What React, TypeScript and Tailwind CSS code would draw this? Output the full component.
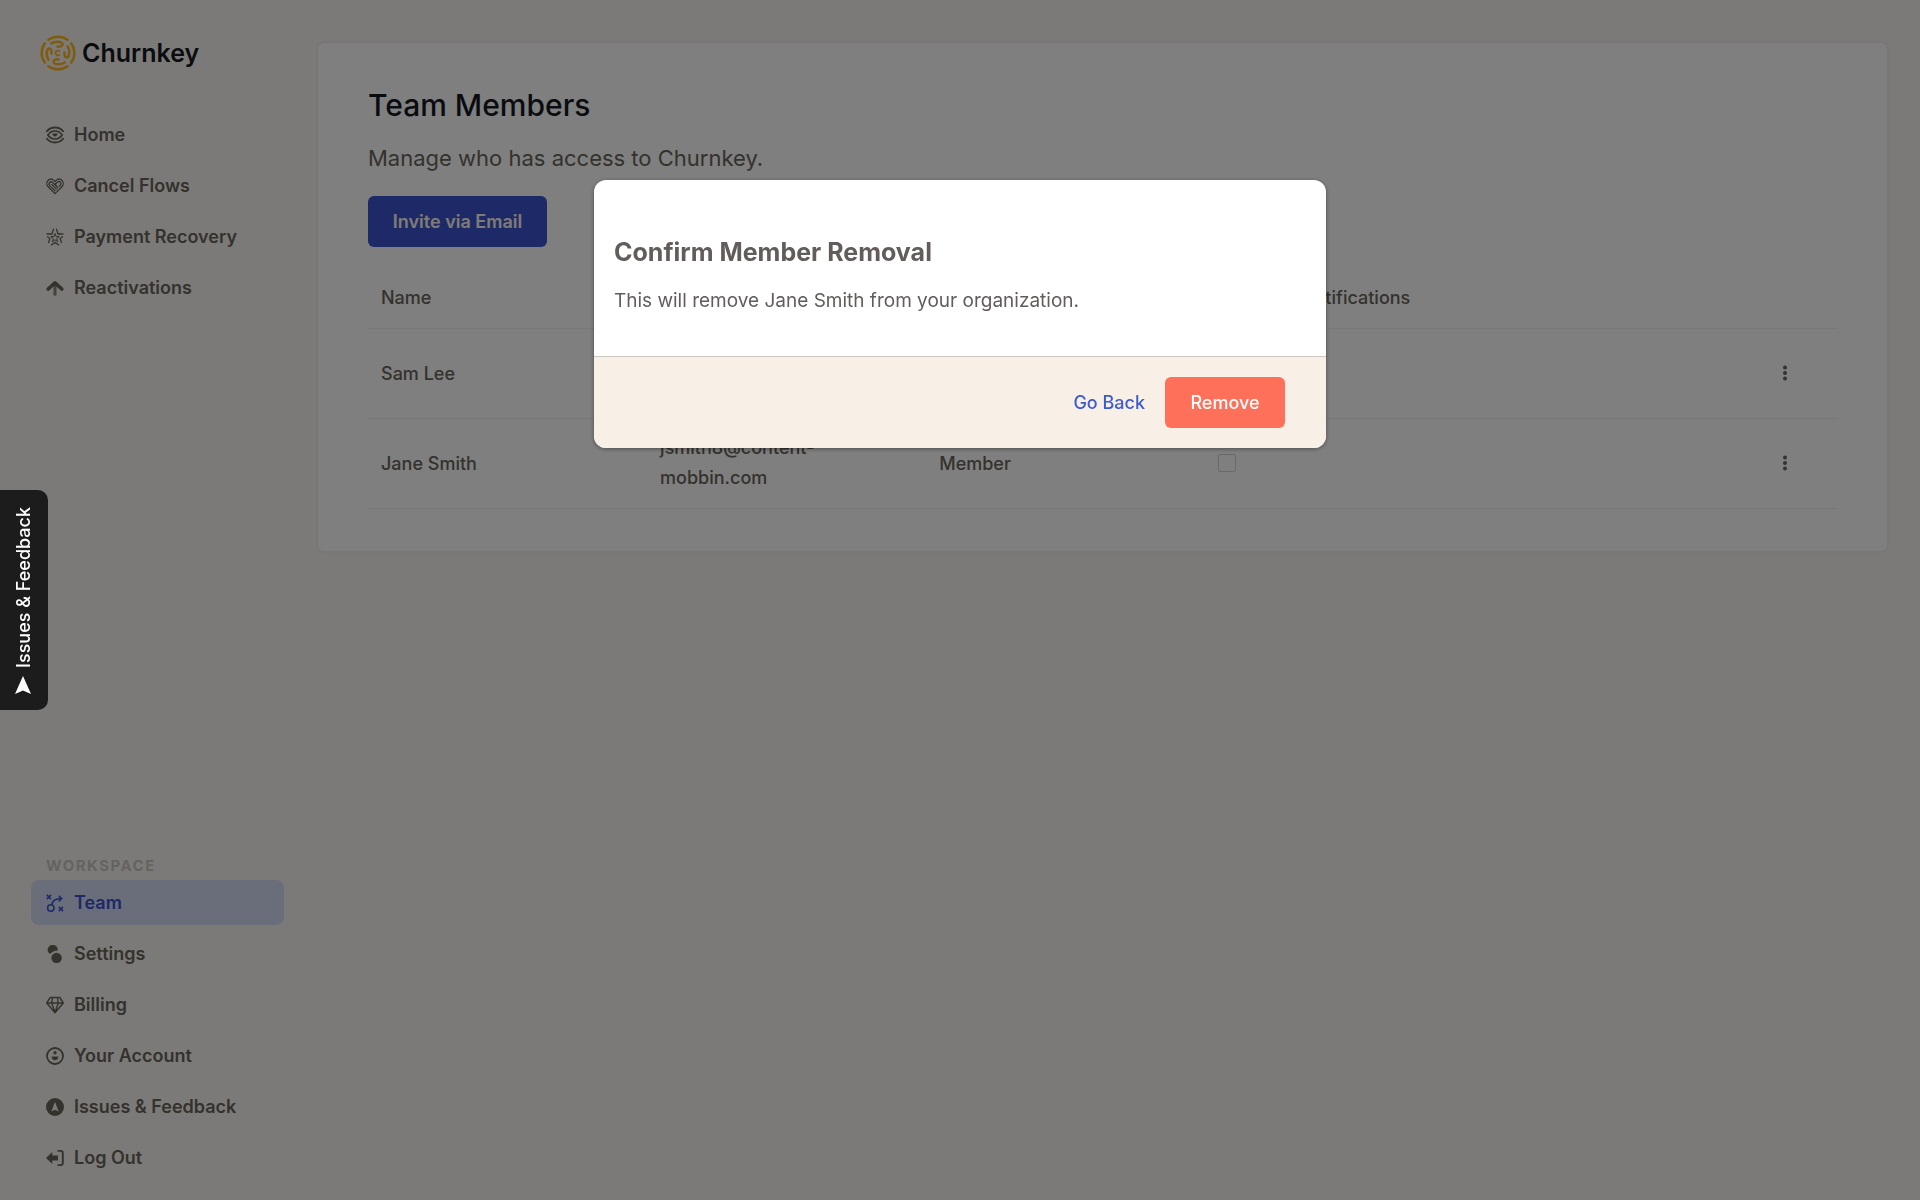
import clsx from 'clsx';
import { ReactNode } from 'react';

type NavItemProps = {
  active?: boolean;
  icon: ReactNode;
  label: string;
};

type Member = {
  email: string;
  name: string;
  role: string;
};

const members: Member[] = [
  { email: 'slee@content-mobbin.com', name: 'Sam Lee', role: 'Owner' },
  { email: 'jsmith8@content-mobbin.com', name: 'Jane Smith', role: 'Member' },
];

const iconProps = {
  className: 'size-[18px] shrink-0',
  fill: 'none',
  stroke: 'currentColor',
  strokeWidth: 1.5,
  viewBox: '0 0 18 18',
};

const HomeIcon = () => (
  <svg {...iconProps} strokeLinecap="round" strokeWidth={1.8}>
    <path d="M.9 5.200C3 2.600 5.800 1.500 9 1.500s6 1.100 8.100 3.700M.9 12.800c2.100 2.600 4.900 3.700 8.100 3.700s6-1.100 8.100-3.700" />
    <path d="M1.800 9C3.600 6.400 6.200 5 9 5s5.400 1.400 7.200 4C14.400 11.600 11.800 13 9 13s-5.400-1.400-7.200-4Z" strokeWidth={1.6} />
    <path d="M6.500 7.600c0 3.800 5 3.800 5 0Z" fill="currentColor" stroke="none" />
  </svg>
);

const HeartIcon = () => (
  <svg {...iconProps} strokeLinecap="round" strokeLinejoin="round" strokeWidth={1.3}>
    <path d="M9 16.600 2.100 9.700C.4 8 .4 5.200 2 3.500 3.700 1.800 6.200 1.800 7.900 3.400L9 4.500l1.100-1.100c1.700-1.600 4.200-1.600 5.900.1 1.600 1.700 1.600 4.500-.1 6.200Z" />
    <path d="M9 13.800 3.700 8.600c-2-2.300.8-5 2.900-3.200l5.200 5.300M10.600 9 9 7.300l2.600-2.400c2.200-1.300 4.300 1 2.900 3l-1.300 1.500M5.800 7.400l4.600 4.700" />
  </svg>
);

const StarIcon = () => (
  <svg {...iconProps} strokeLinejoin="round" strokeWidth={1.3}>
    <path d="m9 5.500 1.100 3.100h3.200l-2.600 2 1 3.100L9 11.800l-2.700 1.900 1-3.100-2.600-2h3.200Z" strokeWidth={1} />
    <path d="M7.600.6 6 6H.6M10.400.6 12 6h5.400M1.200 8.600l2.600 2-1.300 4.400M16.800 8.600l-2.600 2 1.300 4.400M5 17.200l4-2.800 4 2.800" />
  </svg>
);

const ArrowUpIcon = () => (
  <svg {...iconProps}>
    <path d="M2.200 10 9 3.800 15.800 10" strokeLinecap="round" strokeLinejoin="round" strokeWidth={3.6} />
    <path d="M9 5v11.600" strokeWidth={3} opacity={0.75} />
  </svg>
);

const TeamIcon = () => (
  <svg {...iconProps}>
    <circle cx="4.800" cy="14" r="3.200" />
    <path d="M5.800 10.800C6.200 7.600 9 4.700 15.500 4.600M12.800 1.900l2.900 2.700-2.900 2.900M.8.9l4.200 4.200M5 .9.8 5.100M12.800 12.900l4.200 4.200M17 12.900l-4.200 4.200" />
  </svg>
);

const SettingsIcon = () => (
  <svg {...iconProps} fill="currentColor" stroke="none">
    <path d="M3.900 9A5 5 0 1 1 11.700 5.400C8.500 5.600 6.200 6.700 3.900 9Z" />
    <circle cx="10.600" cy="13" r="5.200" />
  </svg>
);

const BillingIcon = () => (
  <svg {...iconProps} strokeLinejoin="round" strokeWidth={1.4}>
    <path d="M4.200 1.500h9.600L17.300 7 9 16.800.7 7ZM.7 7h16.600M6.600 1.500 5.700 7 9 16.600 12.300 7l-.9-5.500" />
  </svg>
);

const AccountIcon = () => (
  <svg {...iconProps}>
    <circle cx="9" cy="9" r="8" strokeWidth={1.8} />
    <circle cx="9" cy="5.700" r="1.700" fill="currentColor" stroke="none" />
    <path d="M5.700 9.500h6.600c.4 5-7 5-6.600 0Z" fill="currentColor" stroke="none" />
  </svg>
);

const FeedbackIcon = () => (
  <svg {...iconProps} fill="currentColor" stroke="none">
    <path
      clipRule="evenodd"
      d="M9 0a9 9 0 1 1 0 18A9 9 0 0 1 9 0Zm0 3.800L5.400 13.500 9 11.700l3.600 1.800Z"
      fillRule="evenodd"
    />
  </svg>
);

const LogOutIcon = () => (
  <svg {...iconProps}>
    <path d="M0 9 6.300 3v3.500H12v5H6.300V15Z" fill="currentColor" stroke="none" />
    <path d="M11.500 1.900h3.300q2 0 2 2v10.200q0 2-2 2h-3.300" strokeWidth={1.9} />
  </svg>
);

const LogoMark = () => (
  <svg className="size-9 text-[#ffb81a]" fill="none" stroke="currentColor" strokeWidth={2.5} viewBox="0 0 36 36">
    {[0, 90, 180, 270].map((angle) => (
      <g key={angle} strokeLinecap="round" strokeLinejoin="round" transform={`rotate(${angle} 18 18)`}>
        <path d="M8.400 4.800a16.300 16.300 0 0 1 19.200 0M11.200 8.500q4.500-2.800 9.600-1.200 2.700 1.100 1.200 3.200-1.200 1.300-4.500 1.100" />
      </g>
    ))}
    <path d="M19.900 16.600a2.400 2.400 0 1 0 0 2.800" strokeWidth={1.8} />
  </svg>
);

const mainNav: NavItemProps[] = [
  { icon: <HomeIcon />, label: 'Home' },
  { icon: <HeartIcon />, label: 'Cancel Flows' },
  { icon: <StarIcon />, label: 'Payment Recovery' },
  { icon: <ArrowUpIcon />, label: 'Reactivations' },
];

const workspaceNav: NavItemProps[] = [
  { active: true, icon: <TeamIcon />, label: 'Team' },
  { icon: <SettingsIcon />, label: 'Settings' },
  { icon: <BillingIcon />, label: 'Billing' },
  { icon: <AccountIcon />, label: 'Your Account' },
  { icon: <FeedbackIcon />, label: 'Issues & Feedback' },
  { icon: <LogOutIcon />, label: 'Log Out' },
];

const NavItem = ({ active, icon, label }: NavItemProps) => (
  <a
    className={clsx(
      'flex h-[45px] items-center gap-2.5 rounded-lg px-[15px] text-[18px] font-semibold',
      active ? 'bg-[#d5dbf5] text-[#3a53d0]' : 'text-[#69645a]',
    )}
    href="#"
  >
    {icon}
    {label}
  </a>
);

const Sidebar = () => (
  <aside className="flex w-[316px] shrink-0 flex-col pt-[35px] pr-8 pb-5 pl-[31px]">
    <a className="flex items-center gap-1.5 pl-[9px] text-[25px] leading-9 font-semibold text-[#14181f]" href="#">
      <LogoMark />
      Churnkey
    </a>
    <nav className="mt-[41px] flex flex-col gap-1.5">
      {mainNav.map((item) => (
        <NavItem key={item.label} {...item} />
      ))}
    </nav>
    <div className="mt-auto px-[15px] pb-0.5 text-[15px] leading-6 font-bold tracking-widest text-[#c9c6c0]">
      WORKSPACE
    </div>
    <nav className="flex flex-col gap-1.5">
      {workspaceNav.map((item) => (
        <NavItem key={item.label} {...item} />
      ))}
    </nav>
  </aside>
);

const MembersTable = () => (
  <table className="mt-5 w-full table-fixed text-left text-[18px] font-medium text-[#69645a]">
    <thead>
      <tr className="h-[61px] border-b border-[#f3efe8]">
        <th className="w-[19%] px-[13px] font-medium">Name</th>
        <th className="w-[19%] px-[13px] font-medium">Email</th>
        <th className="w-[19%] px-[13px] font-medium">Role</th>
        <th className="w-[19%] px-[13px] font-medium whitespace-nowrap">Receives Notifications</th>
        <th aria-label="Actions" />
      </tr>
    </thead>
    <tbody>
      {members.map(({ email, name, role }) => (
        <tr className="h-[90px] border-b border-[#f3efe8]" key={name}>
          <td className="px-[13px]">{name}</td>
          <td className="px-[13px] leading-[30px]">{email}</td>
          <td className="px-[13px]">{role}</td>
          <td className="px-[13px]">
            <input
              aria-label={`Receives notifications: ${name}`}
              className="block size-[18px] appearance-none rounded-xs border border-[#d6d3d1]"
              type="checkbox"
            />
          </td>
          <td className="pr-[42px]">
            <button aria-label={`Actions for ${name}`} className="ml-auto flex size-5 items-center justify-center">
              <svg className="h-4 w-1" fill="currentColor" viewBox="0 0 4 16">
                <circle cx="2" cy="2.500" r="2" />
                <circle cx="2" cy="8" r="2" />
                <circle cx="2" cy="13.500" r="2" />
              </svg>
            </button>
          </td>
        </tr>
      ))}
    </tbody>
  </table>
);

const FeedbackTab = () => (
  <button className="fixed top-[490px] left-0 flex h-[220px] w-12 items-center justify-center rounded-r-[10px] bg-[#1c1c1c] pr-0.5 text-[18px] font-medium text-white">
    <span className="flex rotate-180 items-center gap-2 [writing-mode:vertical-rl]">
      <svg className="h-[18px] w-4 rotate-180" fill="currentColor" viewBox="0 0 16 18">
        <path d="M8 0 16 18 8 14.500 0 18Z" />
      </svg>
      Issues &amp; Feedback
    </span>
  </button>
);

const ConfirmRemovalDialog = () => (
  <div className="fixed inset-0 flex items-start justify-center bg-black/50 pt-[180px]">
    <div
      aria-labelledby="confirm-title"
      aria-modal="true"
      className="w-[732px] overflow-hidden rounded-xl bg-white shadow-[0_1px_4px_rgba(0,0,0,0.4)]"
      role="dialog"
    >
      <div className="h-44 px-5 pt-[52px]">
        <h2 className="text-[25px] leading-10 font-bold text-[#625d5b]" id="confirm-title">
          Confirm Member Removal
        </h2>
        <p className="mt-[13px] text-[19px] leading-8 text-[#625d5b]">
          This will remove Jane Smith from your organization.
        </p>
      </div>
      <div className="flex items-center justify-end gap-5 border-t border-[#cfc8c2] bg-[#f8efe6] py-5 pr-[41px] pl-5 text-[18px] font-medium">
        <button className="text-[#3d5bd0]">Go Back</button>
        <button className="h-[51px] w-[120px] rounded-md bg-[#ff705a] text-white">Remove</button>
      </div>
    </div>
  </div>
);

const App = () => (
  <div className="flex min-h-screen bg-[#f9f5f0] font-['Inter','Liberation_Sans',sans-serif]">
    <Sidebar />
    <main className="min-w-0 flex-1 pt-[41px] pr-[31px]">
      <section className="rounded-lg border-2 border-[#f5ede7] bg-white px-[50px] pt-[41px] pb-[42px]">
        <h1 className="text-[30px] leading-[42px] font-medium text-[#14181f]">Team Members</h1>
        <p className="mt-3.5 text-[22px] leading-9 text-[#69645a]">Manage who has access to Churnkey.</p>
        <button className="mt-5 h-[51px] w-[179px] rounded-md bg-[#3c55d0] text-[18px] font-semibold text-[#fff7ef]">
          Invite via Email
        </button>
        <MembersTable />
      </section>
    </main>
    <ConfirmRemovalDialog />
    <FeedbackTab />
  </div>
);

export default App;
